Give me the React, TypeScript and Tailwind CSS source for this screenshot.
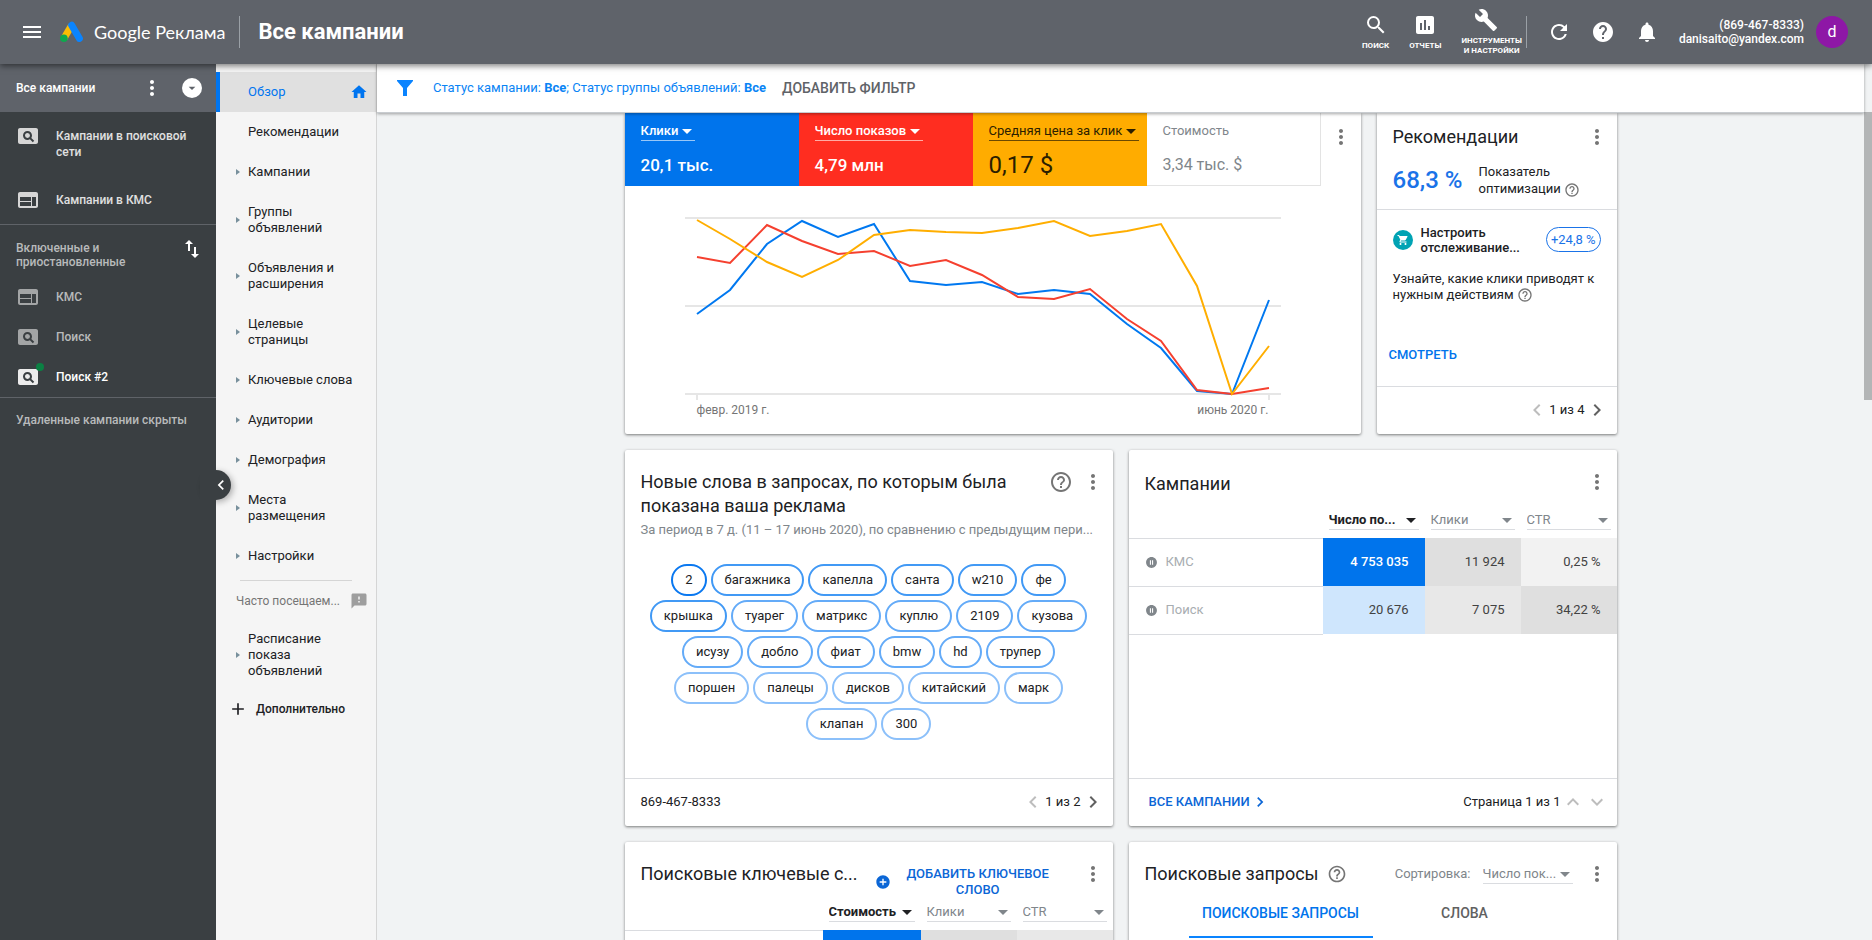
import type { ReactNode } from 'react'
import clsx from 'clsx'
import {
  MdAdd,
  MdAddCircle,
  MdArrowDropDown,
  MdAssessment,
  MdBuild,
  MdChevronLeft,
  MdChevronRight,
  MdExpandLess,
  MdExpandMore,
  MdFeedback,
  MdHelp,
  MdHelpOutline,
  MdHome,
  MdImportExport,
  MdMenu,
  MdMoreVert,
  MdNotifications,
  MdPageview,
  MdPauseCircleFilled,
  MdRefresh,
  MdSearch,
  MdShoppingCart,
  MdWeb,
} from 'react-icons/md'

const navItems = [
  { label: 'Рекомендации', arrow: false },
  { label: 'Кампании', arrow: true },
  { label: 'Группы объявлений', arrow: true },
  { label: 'Объявления и расширения', arrow: true },
  { label: 'Целевые страницы', arrow: true },
  { label: 'Ключевые слова', arrow: true },
  { label: 'Аудитории', arrow: true },
  { label: 'Демография', arrow: true },
  { label: 'Места размещения', arrow: true },
  { label: 'Настройки', arrow: true },
]

const words = [
  { text: '2', border: 'border-[#0a78f0]' },
  { text: 'багажника', border: 'border-[#4199f5]' },
  { text: 'капелла', border: 'border-[#4199f5]' },
  { text: 'санта', border: 'border-[#4199f5]' },
  { text: 'w210', border: 'border-[#4199f5]' },
  { text: 'фе', border: 'border-[#4199f5]' },
  { text: 'крышка', border: 'border-[#4199f5]' },
  { text: 'туарег', border: 'border-[#64abf8]' },
  { text: 'матрикс', border: 'border-[#64abf8]' },
  { text: 'куплю', border: 'border-[#64abf8]' },
  { text: '2109', border: 'border-[#64abf8]' },
  { text: 'кузова', border: 'border-[#64abf8]' },
  { text: 'исузу', border: 'border-[#64abf8]' },
  { text: 'добло', border: 'border-[#64abf8]' },
  { text: 'фиат', border: 'border-[#64abf8]' },
  { text: 'bmw', border: 'border-[#64abf8]' },
  { text: 'hd', border: 'border-[#64abf8]' },
  { text: 'трупер', border: 'border-[#64abf8]' },
  { text: 'поршен', border: 'border-[#8cc0fa]' },
  { text: 'палецы', border: 'border-[#8cc0fa]' },
  { text: 'дисков', border: 'border-[#8cc0fa]' },
  { text: 'китайский', border: 'border-[#8cc0fa]' },
  { text: 'марк', border: 'border-[#8cc0fa]' },
  { text: 'клапан', border: 'border-[#8cc0fa]' },
  { text: '300', border: 'border-[#8cc0fa]' },
]

const series = [
  {
    color: '#0078f0',
    points: '12,106 45,82 82,36 117,13 153,29 189,16 225,73 261,77 297,74 333,86 369,82 405,86 442,116 476,140 512,183 547,186 584,92',
  },
  {
    color: '#f5402f',
    points: '12,49 45,55 82,17 117,33 153,46 189,43 225,58 261,52 297,67 333,89 369,91 405,81 442,111 476,133 512,182 547,186 584,180',
  },
  {
    color: '#ffae00',
    points: '12,12 45,31 82,54 117,69 153,52 189,27 225,22 261,24 297,25 333,20 369,13 405,28 442,23 476,16 512,78 547,186 584,138',
  },
]

function Card({ className, children }: { className?: string; children: ReactNode }) {
  return (
    <section className={clsx('flex flex-col bg-white shadow-[0_1px_3px_rgba(0,0,0,0.5)]', className)}>
      {children}
    </section>
  )
}

function MoreButton() {
  return (
    <button aria-label="Ещё" className="-mr-3 shrink-0 text-[#757575]">
      <MdMoreVert className="size-6" />
    </button>
  )
}

function Dropdown({ label, value, className }: { label: string; value: string; className: string }) {
  return (
    <label className={clsx('flex h-5 items-center border-b', className)}>
      <select aria-label={label} className="min-w-0 flex-1 appearance-none truncate bg-transparent">
        <option>{value}</option>
      </select>
      <MdArrowDropDown className="-mx-1 size-6 shrink-0" />
    </label>
  )
}

function Pager({ text }: { text: string }) {
  return (
    <div className="flex items-center">
      <button aria-label="Назад" className="text-[#bdbdbd]">
        <MdChevronLeft className="size-6" />
      </button>
      <span>{text}</span>
      <button aria-label="Вперёд" className="text-[#616161]">
        <MdChevronRight className="size-6" />
      </button>
    </div>
  )
}

function Header() {
  return (
    <header className="z-30 flex h-16 shrink-0 items-center bg-[#5f636a] pr-6 pl-5 text-white shadow-[0_2px_6px_rgba(0,0,0,0.5)]">
      <button aria-label="Меню">
        <MdMenu className="size-6" />
      </button>
      <svg viewBox="0 0 24 22" className="ml-4 h-[22px] w-6">
        <path d="M11.5 4.5 4.2 17" stroke="#fbbc04" strokeWidth="7" strokeLinecap="butt" />
        <path d="M11.7 4.2 19.4 17.4" stroke="#0a84ff" strokeWidth="7" strokeLinecap="round" />
        <circle cx="3.9" cy="17.3" r="3.8" fill="#0fa84e" />
      </svg>
      <span className="ml-2.5 font-[Lato,sans-serif] text-lg leading-6">Google Реклама</span>
      <span className="ml-3.5 h-8 w-px bg-[#9aa0a6]" />
      <h1 className="ml-4.5 text-[22px] leading-7 font-bold">Все кампании</h1>

      <div className="ml-auto flex items-center text-[8px] leading-[10px] font-bold">
        <button className="flex flex-col items-center">
          <MdSearch className="size-6" />
          <span className="mt-1">ПОИСК</span>
        </button>
        <button className="ml-5 flex flex-col items-center">
          <MdAssessment className="size-6" />
          <span className="mt-1">ОТЧЕТЫ</span>
        </button>
        <button className="ml-5 flex flex-col items-center">
          <MdBuild className="mr-3 mb-1 size-6" />
          <span>ИНСТРУМЕНТЫ</span>
          <span>И НАСТРОЙКИ</span>
        </button>
        <span className="ml-1 h-8 w-px bg-[#9aa0a6]" />
      </div>
      <div className="ml-5 flex items-center gap-5">
        <button aria-label="Обновить">
          <MdRefresh className="size-6" />
        </button>
        <button aria-label="Справка">
          <MdHelp className="size-6" />
        </button>
        <button aria-label="Уведомления">
          <MdNotifications className="size-6" />
        </button>
      </div>
      <div className="ml-5 text-right text-xs leading-[14px] font-medium">
        <p>(869-467-8333)</p>
        <p>danisaito@yandex.com</p>
      </div>
      <button className="ml-3 size-8 rounded-full bg-[#8e17a6] text-base">d</button>
    </header>
  )
}

function CampaignSidebar() {
  return (
    <aside className="relative z-20 w-[216px] shrink-0 bg-[#3a3f42] text-xs leading-5 font-medium text-[#e0e0e0]">
      <div className="flex h-12 items-center bg-[#5f636a] pr-3 pl-4 text-white">
        <span className="flex-1">Все кампании</span>
        <button aria-label="Ещё">
          <MdMoreVert className="size-6" />
        </button>
        <button aria-label="Развернуть" className="ml-4 flex size-6 items-center justify-center">
          <span className="flex size-5 items-center justify-center rounded-full bg-white text-[#5f636a]">
            <MdArrowDropDown className="size-4" />
          </span>
        </button>
      </div>
      <div className="border-b border-[#5f6368] pt-4 pb-3">
        <a href="#search" className="flex items-start pr-4 pl-4">
          <MdPageview className="-mt-1 size-6 shrink-0 text-[#d6d6d6]" />
          <span className="ml-4 flex-1 leading-4">Кампании в поисковой сети</span>
        </a>
        <a href="#display" className="mt-7 flex items-center pl-4">
          <MdWeb className="size-6 text-[#d6d6d6]" />
          <span className="ml-4">Кампании в КМС</span>
        </a>
      </div>
      <div className="border-b border-[#5f6368] text-[#b8babb]">
        <div className="flex items-start pt-3 pr-3 pb-2 pl-4">
          <span className="flex-1 pt-1 leading-[14px]">Включенные и приостановленные</span>
          <button aria-label="Сортировка" className="text-white">
            <MdImportExport className="size-6" />
          </button>
        </div>
        <a href="#c1" className="flex h-10 items-center pl-4">
          <MdWeb className="size-6 text-[#a3a5a6]" />
          <span className="ml-4">КМС</span>
        </a>
        <a href="#c2" className="flex h-10 items-center pl-4">
          <MdPageview className="size-6 text-[#a3a5a6]" />
          <span className="ml-4">Поиск</span>
        </a>
        <a href="#c3" className="flex h-10 items-center pl-4 text-white">
          <span className="relative">
            <MdPageview className="size-6 text-[#ececec]" />
            <span className="absolute -top-0.5 -right-1 size-2 rounded-full bg-[#0b8043]" />
          </span>
          <span className="ml-4">Поиск #2</span>
        </a>
      </div>
      <p className="pt-3 pl-4 text-[#b8babb]">Удаленные кампании скрыты</p>
      <button
        aria-label="Свернуть"
        className="absolute top-[406px] -right-[15px] size-[30px] rounded-full bg-[#3a3f42] shadow-[2px_2px_6px_rgba(0,0,0,0.3)]"
      />
      <span className="absolute top-[400px] right-0 h-11 w-4 bg-[#3a3f42]" />
      <MdChevronLeft className="pointer-events-none absolute top-[411px] -right-[15px] size-5 text-white" />
    </aside>
  )
}

function NavArrow() {
  return (
    <svg viewBox="0 0 4 6" className="h-1.5 w-1 fill-[#78909c]">
      <path d="M0 0 4 3 0 6z" />
    </svg>
  )
}

function PageNav() {
  return (
    <nav className="w-[161px] shrink-0 border-r border-[#d5d5d5] bg-[#f5f5f5] pt-2 leading-4 text-[#202124]">
      <a href="#overview" className="flex h-10 items-center border-l-4 border-[#0075f0] bg-[#e0e0e0] pr-2 pl-7 text-[#0075f0]">
        <span className="flex-1">Обзор</span>
        <MdHome className="size-[18px]" />
      </a>
      {navItems.map((item) => (
        <a key={item.label} href="#nav" className="flex min-h-10 items-center py-3 pr-5 pl-5">
          <span className="w-3">{item.arrow && <NavArrow />}</span>
          <span className="flex-1">{item.label}</span>
        </a>
      ))}
      <div className="mt-1 mr-6 ml-6 h-px bg-[#d5d5d5]" />
      <div className="flex h-10 items-center pr-2 pl-5 text-[#757575]">
        <span className="flex-1 text-xs">Часто посещаем...</span>
        <MdFeedback className="size-[18px] shrink-0 text-[#9e9e9e]" />
      </div>
      <a href="#schedule" className="-mt-0.5 flex items-center py-3 pr-10 pl-5">
        <span className="w-3"><NavArrow /></span>
        <span className="flex-1">Расписание показа объявлений</span>
      </a>
      <button className="mt-2 flex items-center pl-3 text-xs font-medium">
        <MdAdd className="size-5" />
        <span className="ml-2">Дополнительно</span>
      </button>
    </nav>
  )
}

function FilterBar() {
  return (
    <div className="z-10 flex h-[49px] shrink-0 items-center border-b border-[#c8ccd0] bg-white pl-5 shadow-[0_1px_3px_rgba(0,0,0,0.35)]">
      <svg viewBox="0 0 16 16" className="size-4 fill-[#0a84ff]">
        <path d="M0 0h16v1l-6 7v8H6V8L0 1z" />
      </svg>
      <button className="ml-5 text-[#0a84f5]">
        Статус кампании: <b>Все</b>; Статус группы объявлений: <b>Все</b>
      </button>
      <button className="ml-4 text-sm font-medium text-[#5f6368]">ДОБАВИТЬ ФИЛЬТР</button>
    </div>
  )
}

function ChartCard() {
  return (
    <Card className="w-[736px] rounded-b-xs">
      <div className="flex">
        <div className="h-[73px] w-[174px] bg-[#0074ec] pt-2 pl-4 text-white">
          <Dropdown label="Показатель 1" value="Клики" className="w-fit border-white/60 font-medium" />
          <p className="mt-3 text-[17px] leading-6 font-medium">20,1 тыс.</p>
        </div>
        <div className="h-[73px] w-[174px] bg-[#ff2d20] pt-2 pl-4 text-white">
          <Dropdown label="Показатель 2" value="Число показов" className="w-fit border-white/60 font-medium" />
          <p className="mt-3 text-[17px] leading-6 font-medium">4,79 млн</p>
        </div>
        <div className="h-[73px] w-[174px] bg-[#ffac00] pt-2 pl-4 text-[#2b1e00]">
          <Dropdown label="Показатель 3" value="Средняя цена за клик" className="w-fit border-[#6b4900]" />
          <p className="mt-3 text-2xl leading-6">0,17 $</p>
        </div>
        <div className="h-[73px] w-[174px] border-r border-b border-[#e3e3e3] pt-2 pl-4 text-[#80868b]">
          <p className="leading-5">Стоимость</p>
          <p className="mt-3 text-base leading-6">3,34 тыс. $</p>
        </div>
        <div className="flex flex-1 items-start justify-end pt-3 pr-5">
          <MoreButton />
        </div>
      </div>
      <div className="ml-15 w-[596px] pt-[22px]">
        <svg viewBox="0 0 596 192" className="h-48 w-full" fill="none">
          <path d="M0 10h596M0 98h596M0 186h596M12 186v6M584 186v6" stroke="#e6e6e6" strokeWidth="2" />
          {series.map((s) => (
            <polyline key={s.color} points={s.points} stroke={s.color} strokeWidth="2" />
          ))}
        </svg>
        <div className="flex justify-between px-3 pt-1 text-xs leading-3 text-[#757575]">
          <span>февр. 2019 г.</span>
          <span>июнь 2020 г.</span>
        </div>
      </div>
    </Card>
  )
}

function RecommendationsCard() {
  return (
    <Card className="h-[321px] w-60 rounded-b-xs">
      <div className="border-b border-[#dadce0] px-4 pt-3 pb-[11px]">
        <div className="flex items-center justify-between pr-1">
          <h2 className="text-lg leading-6">Рекомендации</h2>
          <MoreButton />
        </div>
        <div className="mt-3.5 flex items-center">
          <span className="w-[86px] text-2xl leading-8 font-medium text-[#1a73e8]">68,3 %</span>
          <span className="leading-[17px]">
            Показатель
            <br />
            оптимизации <MdHelpOutline className="inline size-4 text-[#757575]" />
          </span>
        </div>
      </div>
      <div className="flex flex-1 flex-col px-4 pt-[15px]">
        <div className="flex items-center">
          <span className="flex size-5 items-center justify-center rounded-full bg-[#00a3b4] text-white">
            <MdShoppingCart className="size-3" />
          </span>
          <span className="ml-2 flex-1 leading-[15px] font-medium">
            Настроить
            <br />
            отслеживание...
          </span>
          <span className="rounded-full border border-[#1a73e8] px-1 leading-[23px] text-[#1a73e8]">+24,8 %</span>
        </div>
        <p className="mt-4 leading-4">
          Узнайте, какие клики приводят к нужным действиям{' '}
          <MdHelpOutline className="inline size-4 text-[#757575]" />
        </p>
        <a href="#view" className="mt-[42px] -ml-1 font-medium text-[#0074ec]">
          СМОТРЕТЬ
        </a>
      </div>
      <div className="flex h-12 items-center justify-end border-t border-[#dadce0] pr-2 pb-0.5">
        <Pager text="1 из 4" />
      </div>
    </Card>
  )
}

function NewWordsCard() {
  return (
    <Card className="h-[376px] w-[488px] rounded-xs">
      <div className="flex items-start pt-5 pr-5 pl-4">
        <h2 className="flex-1 text-lg leading-6">Новые слова в запросах, по которым была показана ваша реклама</h2>
        <MdHelpOutline className="mx-2 size-6 text-[#757575]" />
        <MoreButton />
      </div>
      <p className="mr-4 ml-4 leading-6 whitespace-nowrap text-[#80868b]">
        За период в 7 д. (11 – 17 июнь 2020), по сравнению с предыдущим пери...
      </p>
      <div className="mt-[22px] flex flex-wrap justify-center gap-1 px-5">
        {words.map((word) => (
          <span key={word.text} className={clsx('rounded-full border-2 px-3 leading-7', word.border)}>
            {word.text}
          </span>
        ))}
      </div>
      <div className="mt-auto flex h-12 items-center justify-between border-t border-[#dadce0] pr-2 pb-0.5 pl-4">
        <span>869-467-8333</span>
        <Pager text="1 из 2" />
      </div>
    </Card>
  )
}

function ColumnHead({ label, value, active }: { label: string; value: string; active?: boolean }) {
  return (
    <th className="px-1.5 pb-2 font-normal">
      <Dropdown
        label={label}
        value={value}
        className={clsx('border-[#dadce0]', active ? 'font-bold text-[#202124]' : 'text-[#80868b]')}
      />
    </th>
  )
}

function CampaignsCard() {
  return (
    <Card className="h-[376px] w-[488px] rounded-xs">
      <div className="flex items-start justify-between pt-5 pr-5 pl-4">
        <h2 className="text-lg leading-7">Кампании</h2>
        <MoreButton />
      </div>
      <table className="mt-3 w-full table-fixed text-right text-[#424242]">
        <colgroup>
          <col />
          <col className="w-[102px]" />
          <col className="w-24" />
          <col className="w-24" />
        </colgroup>
        <thead>
          <tr>
            <th />
            <ColumnHead label="Столбец 1" value="Число по..." active />
            <ColumnHead label="Столбец 2" value="Клики" />
            <ColumnHead label="Столбец 3" value="CTR" />
          </tr>
        </thead>
        <tbody>
          <tr className="h-12">
            <td className="border-y border-[#dadce0] pl-4 text-left text-[#a8adb1]">
              <span className="flex items-center gap-2">
                <MdPauseCircleFilled className="size-[13px] text-[#80868b]" />
                КМС
              </span>
            </td>
            <td className="bg-[#0074ec] pr-4 font-medium text-white">4 753 035</td>
            <td className="bg-[#dfdfdf] pr-4">11 924</td>
            <td className="bg-[#f2f2f2] pr-4">0,25 %</td>
          </tr>
          <tr className="h-12">
            <td className="border-b border-[#dadce0] pl-4 text-left text-[#a8adb1]">
              <span className="flex items-center gap-2">
                <MdPauseCircleFilled className="size-[13px] text-[#80868b]" />
                Поиск
              </span>
            </td>
            <td className="bg-[#cfe6fd] pr-4">20 676</td>
            <td className="bg-[#e8e8e8] pr-4">7 075</td>
            <td className="bg-[#dfdfdf] pr-4">34,22 %</td>
          </tr>
        </tbody>
      </table>
      <div className="mt-auto flex h-12 items-center border-t border-[#dadce0] pr-2 pb-0.5 pl-5">
        <a href="#all" className="flex flex-1 items-center font-medium text-[#0b66d6]">
          ВСЕ КАМПАНИИ <MdChevronRight className="size-5" />
        </a>
        <span>Страница 1 из 1</span>
        <button aria-label="Предыдущая страница" className="text-[#bdbdbd]">
          <MdExpandLess className="size-6" />
        </button>
        <button aria-label="Следующая страница" className="text-[#bdbdbd]">
          <MdExpandMore className="size-6" />
        </button>
      </div>
    </Card>
  )
}

function KeywordsCard() {
  return (
    <Card className="h-[376px] w-[488px] rounded-xs">
      <div className="flex items-start pt-5 pr-5 pl-4">
        <h2 className="w-[218px] text-lg leading-6">Поисковые ключевые с...</h2>
        <button className="mt-1 flex flex-1 items-center leading-4 font-medium text-[#0b66d6]">
          <MdAddCircle className="ml-4 size-4" />
          <span className="ml-4">
            ДОБАВИТЬ КЛЮЧЕВОЕ
            <br />
            СЛОВО
          </span>
        </button>
        <MoreButton />
      </div>
      <table className="mt-1 w-full table-fixed">
        <colgroup>
          <col />
          <col className="w-[98px]" />
          <col className="w-24" />
          <col className="w-24" />
        </colgroup>
        <thead>
          <tr>
            <th />
            <ColumnHead label="Столбец 1" value="Стоимость" active />
            <ColumnHead label="Столбец 2" value="Клики" />
            <ColumnHead label="Столбец 3" value="CTR" />
          </tr>
        </thead>
        <tbody>
          <tr className="h-12">
            <td className="border-t border-[#dadce0]" />
            <td className="bg-[#0074ec]" />
            <td className="bg-[#dfdfdf]" />
            <td className="bg-[#e8e8e8]" />
          </tr>
        </tbody>
      </table>
    </Card>
  )
}

function QueriesCard() {
  return (
    <Card className="h-[376px] w-[488px] rounded-xs">
      <div className="flex items-center pt-5 pr-5 pl-4">
        <h2 className="text-lg leading-6">Поисковые запросы</h2>
        <MdHelpOutline className="ml-2 size-5 text-[#757575]" />
        <span className="ml-auto text-[#80868b]">Сортировка:</span>
        <Dropdown label="Сортировка" value="Число пок..." className="mr-3 ml-3 w-[90px] border-[#dadce0] text-[#80868b]" />
        <MoreButton />
      </div>
      <div className="mt-1 flex justify-center text-sm font-medium">
        <button className="h-12 w-[184px] border-b-2 border-[#0a84ff] text-[#0074ec]">ПОИСКОВЫЕ ЗАПРОСЫ</button>
        <button className="h-12 w-[184px] border-b-2 border-transparent text-[#616161]">СЛОВА</button>
      </div>
    </Card>
  )
}

export default function App() {
  return (
    <div className="flex h-screen flex-col overflow-hidden bg-[#f1f3f4] font-[Roboto,sans-serif] text-[13px] leading-5 text-[#202124]">
      <Header />
      <div className="flex min-h-0 flex-1">
        <CampaignSidebar />
        <PageNav />
        <main className="flex min-w-0 flex-1 flex-col">
          <FilterBar />
          <div className="min-h-0 flex-1 overflow-hidden">
            <div className="mx-auto flex w-[992px] flex-wrap gap-4">
              <ChartCard />
              <RecommendationsCard />
              <NewWordsCard />
              <CampaignsCard />
              <KeywordsCard />
              <QueriesCard />
            </div>
          </div>
        </main>
        <div className="w-2 shrink-0 bg-[#f1f3f4] pt-12">
          <div className="h-72 bg-[#b3b5b6]" />
        </div>
      </div>
    </div>
  )
}
